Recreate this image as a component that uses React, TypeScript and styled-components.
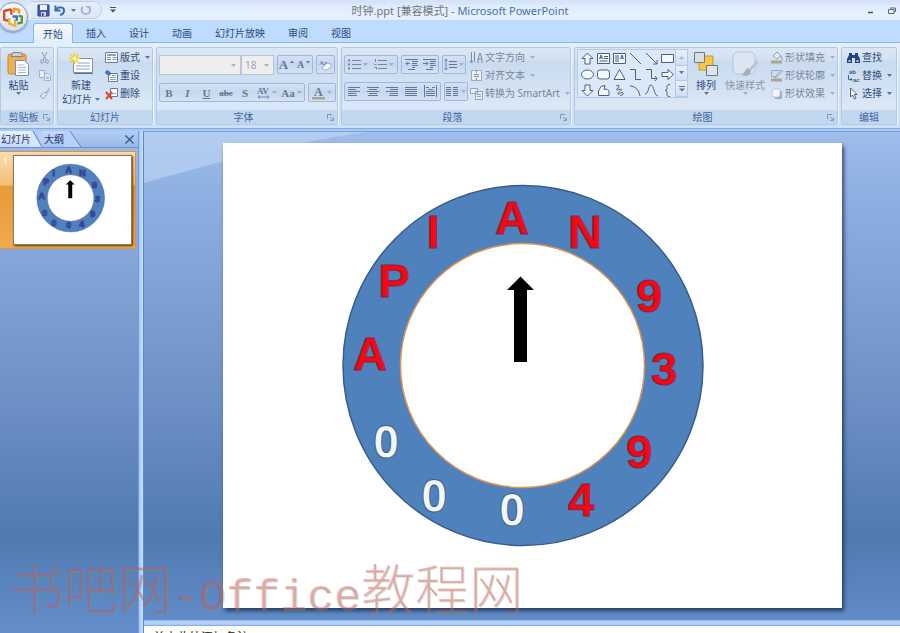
import React from "react";
import styled, { createGlobalStyle, css } from "styled-components";

const uiFont = `"Noto Sans", "Noto Sans CJK SC", sans-serif`;

const GlobalStyle = createGlobalStyle`
  *, *::before, *::after { box-sizing: border-box; }
  body { margin: 0; background: #bfdbff; }
  button, select { font: inherit; color: inherit; margin: 0; padding: 0; border: 0; background: none; }
  svg { display: block; flex: none; }
`;

const Window = styled.div`
  position: relative;
  display: flex;
  flex-direction: column;
  height: 100vh;
  overflow: hidden;
  font: 10px/14px ${uiFont};
  color: #2f4a78;
`;

/* ---------- title bar ---------- */

const TitleBar = styled.header`
  display: grid;
  grid-template-columns: 1fr auto 1fr;
  align-items: center;
  height: 21px;
  padding-left: 20px;
  background: linear-gradient(#d3e2f8 0, #d8e6fa 4px, #e2edfc 6px, #e7f1fe 100%);
  border-bottom: 1px solid #c3d7f0;
`;

const QuickAccess = styled.div`
  display: flex;
  align-items: center;
  gap: 8px;
`;

const QuickPill = styled.div`
  display: flex;
  align-items: center;
  gap: 4px;
  height: 18px;
  margin-left: 11px;
  padding: 0 9px 0 6px;
  border: 1px solid #bccde6;
  border-left: 0;
  border-radius: 0 9px 9px 0;
  background: linear-gradient(#e4eefb, #dbe7f8);
`;

const Title = styled.h1`
  margin: 0;
  font-size: 11px;
  line-height: 14px;
  font-weight: 400;
  color: #71757e;
  white-space: nowrap;
  padding-top: 2px;
`;

const AppName = styled.span`
  color: #4670b4;
`;

const WindowButtons = styled.div`
  display: flex;
  justify-content: flex-end;
  gap: 14px;
  padding: 0 4px 0 0;
`;

const OfficeButton = styled.button`
  position: absolute;
  left: -2px;
  top: 2px;
  display: grid;
  place-items: center;
  width: 30px;
  height: 30px;
  border: 1px solid #8d9ebb;
  border-radius: 50%;
  background: radial-gradient(circle at 50% 30%, #ffffff 0, #eef1f6 45%, #c6cedd 100%);
  box-shadow: 0 1px 2px #7c94bb;
`;

/* ---------- ribbon ---------- */

const TabStrip = styled.nav`
  display: flex;
  align-items: flex-end;
  height: 22px;
  padding-left: 33px;
  background: #bfdbff;
  border-bottom: 1px solid #8fb3e3;
`;

const RibbonTab = styled.button<{ $active?: boolean }>`
  height: 20px;
  padding: 0 9px;
  margin-right: 3px;
  color: #2b4a80;
  border: 1px solid transparent;
  border-bottom: 0;
  border-radius: 3px 3px 0 0;
  ${(p) =>
    p.$active &&
    css`
      margin-bottom: -1px;
      border-color: #8fb3e3;
      background: linear-gradient(#f6faff, #e3edf9);
    `}
`;

const Ribbon = styled.div`
  display: flex;
  gap: 3px;
  height: 86px;
  padding: 4px 3px 3px 0;
  background: linear-gradient(#e6effa, #d3e3f6 30%, #cfe0f5);
  border-bottom: 1px solid #86aada;
`;

const Group = styled.section<{ $w: number; $grow?: boolean }>`
  display: flex;
  flex-direction: column;
  flex: ${(p) => (p.$grow ? "1 0" : "0 0")} ${(p) => p.$w}px;
  border: 1px solid #b0c9e7;
  border-radius: 2px;
  overflow: hidden;
  background: linear-gradient(#dbe7f5 0, #d2e1f2 12px, #c9dbef 14px, #dce9f7 64px);
  box-shadow: 1px 0 0 #f0f6fd;
`;

const GroupBody = styled.div<{ $gap?: number }>`
  flex: 1;
  display: flex;
  gap: ${(p) => p.$gap ?? 3}px;
  padding: 0 2px;
`;

const GroupLabel = styled.footer`
  display: flex;
  align-items: center;
  height: 14px;
  padding: 0 3px;
  background: #c1d8f0;
  color: #44649f;
`;

const LabelText = styled.h2`
  flex: 1;
  margin: 0;
  font-size: 10px;
  line-height: 14px;
  font-weight: 400;
  text-align: center;
`;

const BigButton = styled.button<{ $w: number; $off?: boolean }>`
  display: flex;
  flex-direction: column;
  align-items: center;
  width: ${(p) => p.$w}px;
  padding-top: 2px;
  line-height: 14px;
  white-space: nowrap;
  color: ${(p) => (p.$off ? "#8c95a4" : "#2f4a78")};
`;

const BigPicture = styled.span`
  display: flex;
  align-items: center;
  height: 28px;
`;

const ButtonLine = styled.span`
  display: flex;
  align-items: center;
  gap: 3px;
`;

const Stack = styled.div<{ $inset?: boolean }>`
  display: flex;
  flex-direction: column;
  padding-left: ${(p) => (p.$inset ? 3 : 0)}px;
`;

const SmallButton = styled.button<{ $off?: boolean }>`
  display: flex;
  align-items: center;
  gap: 2px;
  height: 18px;
  white-space: nowrap;
  color: ${(p) => (p.$off ? "#7b8596" : "#2f4a78")};
`;

const Rows = styled.div`
  display: flex;
  flex-direction: column;
  gap: 8px;
  padding-top: 7px;
`;

const Row = styled.div`
  display: flex;
  gap: 3px;
`;

const ComboPair = styled.div`
  display: flex;
`;

const ToolSet = styled.div`
  display: flex;
  height: 19px;
  border: 1px solid #9db8da;
  border-radius: 2px;
  background: linear-gradient(#d3e1f2, #c6d8ee 50%, #d3e2f4);
`;

const Tool = styled.button<{ $w: number }>`
  display: flex;
  align-items: center;
  justify-content: center;
  gap: 2px;
  width: ${(p) => p.$w}px;
  color: #65779a;
`;

const Glyph = styled.span<{ $size?: number; $kind?: "bold" | "italic" | "under" | "strike" }>`
  font-family: "Liberation Serif", serif;
  font-size: ${(p) => p.$size ?? 11}px;
  line-height: 14px;
  font-weight: 700;
  font-style: ${(p) => (p.$kind === "italic" ? "italic" : "normal")};
  text-decoration: ${(p) => (p.$kind === "under" ? "underline" : p.$kind === "strike" ? "line-through" : "none")};
`;

const Combo = styled.div<{ $w: number }>`
  position: relative;
  width: ${(p) => p.$w}px;
  height: 20px;
  border: 1px solid #b4c5dc;
  background: #eeeeee;
`;

const ComboSelect = styled.select`
  appearance: none;
  width: 100%;
  height: 100%;
  padding-left: 3px;
  color: #a0a4aa;
`;

const ComboArrow = styled.span`
  position: absolute;
  right: 4px;
  top: 8px;
  pointer-events: none;
`;

const Gallery = styled.div`
  display: flex;
  height: 49px;
  margin-top: 1px;
  border: 1px solid #b4cae6;
  background: #dae8f8;
`;

const GalleryGrid = styled.div`
  display: grid;
  grid-template-columns: repeat(6, 16px);
  grid-template-rows: repeat(3, 16px);
  padding-left: 1px;
  place-items: center;
`;

const GalleryScroll = styled.div`
  display: grid;
  grid-template-rows: repeat(3, 1fr);
  width: 12px;
  border-left: 1px solid #b4cae6;
`;

const ScrollButton = styled.button`
  display: grid;
  place-items: center;
  border-bottom: 1px solid #b4cae6;
  background: linear-gradient(#e6f0fc, #cfdff3);
`;

/* ---------- work area ---------- */

const Workspace = styled.div`
  flex: 1;
  display: flex;
  min-height: 0;
  padding-top: 2px;
  background: #a9c9f3;
`;

const paneFill = "linear-gradient(#9ebdeb 0, #8fb0e2 60px, #7e9fd2 170px, #6b8ec4 280px, #4f7ab0 405px, #6690cd 510px)";

const SidePane = styled.aside`
  display: flex;
  flex-direction: column;
  width: 139px;
  border-right: 1px solid #6f9ad6;
  background: ${paneFill};
`;

const PaneHeader = styled.div`
  display: flex;
  align-items: center;
  height: 17px;
  background: linear-gradient(#b4cdf3, #98b9ea);
  border-bottom: 1px solid #6c93cf;
`;

const PaneTab = styled.button<{ $active?: boolean }>`
  height: 16px;
  padding: 0 0 0 ${(p) => (p.$active ? 1 : 2)}px;
  color: #1f3566;
  white-space: nowrap;
  background: ${(p) => (p.$active ? "linear-gradient(#eaf2fe, #c3d8f8)" : "linear-gradient(#c6dafa, #a6c3f0)")};
`;

const PaneClose = styled.button`
  margin-left: auto;
  padding: 4px;
`;

const ThumbRow = styled.button`
  display: flex;
  align-items: flex-start;
  width: 136px;
  margin-top: 3px;
  padding: 3px;
  border: solid #d7924c;
  border-width: 1px 1px 1px 0;
  background: linear-gradient(#fbdcae 0, #f5bf77 34%, #e79a38 36%, #f0aa4e 100%);
`;

const ThumbNumber = styled.span`
  width: 10px;
  color: #ffffff;
  text-align: left;
  font-size: 8px;
  line-height: 14px;
`;

const ThumbSheet = styled.span`
  flex: 1;
  background: #ffffff;
  border: 1px solid #8a7a60;
  box-shadow: 1px 1px 2px #5f3a10;
`;

const Splitter = styled.div`
  width: 4px;
  background: linear-gradient(90deg, #a4c8f6, #c6dffd);
`;

const MainColumn = styled.main`
  flex: 1;
  display: flex;
  flex-direction: column;
  min-width: 0;
  border-left: 1px solid #5d8acb;
`;

const Canvas = styled.div`
  position: relative;
  flex: 1;
  min-height: 0;
  padding: 11px 58px 12px 79px;
  background: ${paneFill};
  border-top: 1px solid #7ba2da;
  overflow: hidden;
`;

const Sheen = styled.svg`
  position: absolute;
  left: 0;
  top: 0;
`;

const SlideSheet = styled.article`
  position: relative;
  background: #ffffff;
  box-shadow: 2px 3px 4px rgba(20, 40, 70, 0.75);
`;

const NotesBar = styled.div`
  flex: none;
  height: 6px;
  background: linear-gradient(#8fb4ea 0, #b9d4f8 2px, #a6c6f2 5px, #6f98d2 6px);
`;

const Notes = styled.div`
  flex: none;
  height: 7px;
  padding: 3px 9px 0;
  overflow: hidden;
  background: #ffffff;
  color: #222222;
  font-size: 12px;
  line-height: 18px;
`;

const Watermark = styled.div`
  position: absolute;
  left: 10px;
  bottom: 0;
  font-family: "Noto Sans CJK SC", sans-serif;
  font-weight: 300;
  font-size: 54px;
  line-height: 68px;
  white-space: nowrap;
  color: rgba(236, 60, 80, 0.38);
  text-shadow: 1px 1px 0 rgba(70, 190, 110, 0.25);
  pointer-events: none;
`;

const WatermarkLatin = styled.span`
  font-family: "Liberation Mono", monospace;
  font-weight: 400;
  font-size: 45px;
`;

/* ---------- drawings ---------- */

const Arrow = ({ c = "#5f7295" }: { c?: string }) => (
  <svg width="5" height="3" viewBox="0 0 5 3"><path d="M0 0h5L2.500 3z" fill={c} /></svg>
);

const Launcher = () => (
  <svg width="7" height="7" viewBox="0 0 7 7" fill="none" stroke="#7d97bd">
    <path d="M.5 5V.5H5M3 3l3 3M6.500 3.500v3h-3" />
  </svg>
);

const icons: Record<string, React.ReactNode> = {
  cut: <g fill="none" stroke="#8c9bb3"><path d="M4 1l4 8M9 1L5 9" /><circle cx="4" cy="10.500" r="1.600" /><circle cx="9" cy="10.500" r="1.600" /></g>,
  copy: <g fill="#e4ecf6" stroke="#9eafc8"><path d="M1.500 1.500h5v7h-5zM6.500 4.500h4l2 2v5h-6z" /><path d="M8 8h3M8 9.500h3" /></g>,
  brush: <g><path d="M11 1L7 6l2 1 3-5z" fill="#a9b5c7" /><path d="M7 5L2 9l3 3 4-5z" fill="#dfe6ef" stroke="#9aa9c0" /></g>,
  layout: <g><path d="M.5 1.500h12v10H.5z" fill="#fff" stroke="#5f7ea9" /><path d="M2 3h9v2H2z" fill="#86a0c4" /><path d="M2 6.500h4M2 8.500h4M7.500 6.500h4M7.500 8.500h4" stroke="#7e98bd" /></g>,
  reset: <g><path d="M3.500 4.500h9v8h-9z" fill="#fff" stroke="#5f7ea9" /><path d="M5 10.500h6M5 8.500h6M7 6.500h4" stroke="#8aa2c5" /><path d="M5 6.500C6 2.500 4 2 2.500 2.500V1L0 3.500 2.500 6V4.500" fill="#4876b8" stroke="#3a65a5" strokeWidth=".7" /></g>,
  remove: <g><path d="M5.500 1.500h7v8h-7z" fill="#fff" stroke="#5f7ea9" /><path d="M7 6.500h4" stroke="#7e98bd" /><path d="M1 5l6 7M7 5l-6 7" stroke="#e0452b" strokeWidth="2" /></g>,
  textDir: <g fill="none" stroke="#7d8ca3"><path d="M1.500 1v10M4.500 1v10M8 12V8l2-6 2 6v4M8 8h4" /><path d="M0 10l1.500 2L3 10" /></g>,
  alignText: <g><path d="M1.500 1.500h10v10h-10z" fill="#eef3f9" stroke="#98a9c2" /><path d="M4 5.500h5M4 7.500h5M6.500 2v2M6.500 9v2" stroke="#7d8ca3" /></g>,
  smartArt: <g fill="#e6edf6" stroke="#93a4bd"><path d="M.5 1.500h7v5h-7zM5.500 4.500h7v8h-7z" /><path d="M7 7.500h4M7 9.500h4" /></g>,
  fill: <g><path d="M3 5l4-4 4 4-4 3z" fill="#e6ebf1" stroke="#949fae" /><path d="M11 5c1 1 1.500 3 1 4" stroke="#949fae" fill="none" /><path d="M1 9.500h11v3H1z" fill="#aaa593" /></g>,
  outline: <g><path d="M1.500 1.500h8M1.500 1.500v6h5" stroke="#98a9c2" fill="none" /><path d="M11.500 1L6 7l-1 2 2-1 5.500-6z" fill="#dfe5ee" stroke="#8594ac" strokeWidth=".8" /><path d="M1 9.500h11v3H1z" fill="#aaa593" /></g>,
  effect: <g><path d="M4 4h8v7a2 2 0 01-2 1H5z" fill="#9fabbc" /><rect x="2" y="2" width="8" height="8" rx="2" fill="#f2f5f9" stroke="#bcc7d6" /></g>,
  find: <g fill="#23457f"><path d="M2 2h3v2h3V2h3v2l2 4v4H8V7H5v5H0V8l2-4z" /><path d="M1.500 9h2v2h-2zM9.500 9h2v2h-2z" fill="#b9cdea" /></g>,
  replace: <g fontFamily="Liberation Sans" fontWeight="700" fontSize="6"><text x="2" y="5" fill="#44546e">ab</text><text x="6" y="13" fill="#2e7a42">ac</text><path d="M1.500 6v4.500H5M3.500 9L5 10.500 3.500 12" fill="none" stroke="#3566b0" /></g>,
  pointer: <path d="M3.500 1v9l2-2 2 4 1.500-1-1.800-3.500H10z" fill="#fff" stroke="#44546e" strokeWidth=".9" />,
  eraser: <g><text x="0" y="7" fontSize="7" fontFamily="Liberation Serif" fontWeight="700" fill="#70819d">Aa</text><path d="M3 10l5-5 4 1v3l-4 3H5z" fill="#f1f4f8" stroke="#97a5bb" strokeWidth=".8" /></g>,
  bullets: <g stroke="#7486a4"><path d="M0 2.500h2M0 6.500h2M0 10.500h2" strokeWidth="2" /><path d="M4 2.500h9M4 6.500h9M4 10.500h9" /></g>,
  numbers: <g stroke="#7486a4"><path d="M1.500 1v3M.5 6.500h2M.5 9.500h2v2" fill="none" /><path d="M4 2.500h9M4 6.500h9M4 10.500h9" /></g>,
  outdent: <g stroke="#62779b"><path d="M0 1.500h13M7 3.500h6M7 5.500h5M7 7.500h6M7 9.500h3M3 11.500h7" /><path d="M5 5.500H1M3 3.500l-2 2 2 2" fill="none" /></g>,
  indent: <g stroke="#62779b"><path d="M0 1.500h13M7 3.500h6M7 5.500h5M7 7.500h6M7 9.500h3M3 11.500h7" /><path d="M0 5.500h5M3 3.500l2 2-2 2" fill="none" /></g>,
  spacing: <g stroke="#62779b"><path d="M5 3.500h8M5 6.500h8M5 9.500h8" /><path d="M2 1v11M.5 3L2 1l1.500 2M.5 10L2 12l1.500-2" fill="none" strokeWidth=".8" /></g>,
  left: <path d="M0 2.500h12M0 4.500h8M0 6.500h12M0 8.500h8M0 10.500h9" stroke="#62779b" />,
  center: <path d="M0 2.500h12M2 4.500h8M0 6.500h12M2 8.500h8M1 10.500h10" stroke="#62779b" />,
  right: <path d="M0 2.500h12M4 4.500h8M0 6.500h12M4 8.500h8M3 10.500h9" stroke="#62779b" />,
  justify: <path d="M0 2.500h12M0 4.500h12M0 6.500h12M0 8.500h12M0 10.500h12" stroke="#62779b" />,
  spread: <g stroke="#62779b"><path d="M.5 0v12M12.500 0v12M2 2.500h3M8 2.500h3M2 6.500h9M2 8.500h9M2 10.500h9M4 4.500h5" /></g>,
  columns: <path d="M0 2.500h5M0 4.500h5M0 6.500h5M0 8.500h5M0 10.500h5M7 2.500h5M7 4.500h5M7 6.500h5M7 8.500h5M7 10.500h5" stroke="#62779b" />,
  spacingAV: <g><text x="0" y="8" fontSize="9" fontFamily="Liberation Serif" fontWeight="700" fill="#65779a">AV</text><path d="M1 11h10M3 9.500L1 11l2 1.500M10 9.500l2 1.500-2 1.500" fill="none" stroke="#65779a" strokeWidth=".8" /></g>,
};

const Icon = ({ name, size = 13 }: { name: string; size?: number }) => (
  <svg width={size} height={size} viewBox="0 0 13 13" aria-hidden="true">{icons[name]}</svg>
);

const shapes: [string, React.ReactNode][] = [
  ["上箭头", <path d="M6.500 1L12 6.500H9V12H4V6.500H1z" />],
  ["文本框", <g><path d="M.5 1.500h12v10H.5z" /><path d="M2.500 7L4 3l1.500 4M3 6h2M7 4.500h4M7 6.500h4M2.500 9h8" /></g>],
  ["竖排文本框", <g><path d="M.5 1.500h12v10H.5z" /><path d="M7.500 7L9 3l1.500 4M8 6h2M3 3v7M5 3v7" /></g>],
  ["直线", <path d="M1 1l11 11" />],
  ["箭头", <path d="M1 1l11 11M12 8v4H8" />],
  ["矩形", <path d="M.5 2.500h12v8H.5z" />],
  ["椭圆", <ellipse cx="6.500" cy="6.500" rx="6" ry="4.500" />],
  ["圆角矩形", <rect x=".5" y="2" width="12" height="9" rx="2.500" />],
  ["三角形", <path d="M6.500 1.500L12 11.500H1z" />],
  ["肘形线", <path d="M1 1.500h5.500v10H12" fill="none" />],
  ["肘形箭头", <path d="M1 1.500h5.500v9H12M10 8l2 2.500L10 13" fill="none" />],
  ["右箭头", <path d="M1 4.500h6V1.500l5.500 5-5.500 5v-3H1z" />],
  ["下箭头", <path d="M6.500 12L12 6.500H9V1H4v5.500H1z" />],
  ["任意多边形", <path d="M1.500 11.500V7L4 2.500l4-1-1 4c2-1 5 0 5 2.500v3.500z" />],
  ["自由曲线", <path d="M3 2c4-2 4 1 1 3-2 2 3 0 4 0 2 1-4 4-3 5s4-3 5-1-2 2-3 3" fill="none" />],
  ["弧形", <path d="M1 2c5 0 9 4 10 10" fill="none" />],
  ["曲线", <path d="M0 10C4 10 3 1 6 1S9 12 13 12" fill="none" />],
  ["左大括号", <path d="M9 .5c-3 0-3 1-3 3s0 3-2 3c2 0 2 1 2 3s0 3 3 3" fill="none" />],
];

const OfficeLogo = () => (
  <svg width="22" height="22" viewBox="0 0 20 20" fill="none" strokeWidth="2.200" strokeLinejoin="round">
    <path d="M8.500 3L2 4.500v8l4 1M8.500 3v5" stroke="#d5502c" />
    <path d="M11 6V2.500l4.500 1V7" stroke="#ef9a2a" />
    <path d="M15 9l3 .5v5.500l-4 1" stroke="#5b9a3c" />
    <path d="M6.500 11v5l5.500 2v-6" stroke="#e9b82f" />
    <path d="M9.500 9.500h4v4" stroke="#3d74c4" />
  </svg>
);

const PasteArt = () => (
  <svg width="24" height="26" viewBox="0 0 24 26">
    <rect x="1" y="3" width="18" height="20" rx="2" fill="#edb04f" stroke="#c5862d" />
    <path d="M6 1.500h8l2 4H4z" fill="#c9ced6" stroke="#7f8793" />
    <path d="M8.500 9.500h9l4 4v11h-13z" fill="#fdfeff" stroke="#7a91b5" />
    <path d="M11 14h6M11 16.500h8M11 19h8M11 21.500h8" stroke="#a5b6cf" />
  </svg>
);

const NewSlideArt = () => (
  <svg width="26" height="24" viewBox="0 0 26 24">
    <path d="M5.500 6.500h19v14h-19z" fill="#fff" stroke="#7d92b2" />
    <path d="M6 21.500h19" stroke="#5d7294" />
    <path d="M10 11h12M8 14h14M8 17h14" stroke="#b3c1d7" strokeWidth="1.500" />
    <path d="M6.500 1v11M1 6.500h11M2.500 2.500l8 8M10.500 2.500l-8 8" stroke="#f6cf27" strokeWidth="1.700" />
    <circle cx="6.500" cy="6.500" r="2" fill="#fff6b0" />
  </svg>
);

const ArrangeArt = () => (
  <svg width="26" height="26" viewBox="0 0 26 26">
    <path d="M6 5h14v14H6z" fill="#f5c842" stroke="#c99a1f" />
    <path d="M1.500 1.500h10v10h-10z" fill="#d9dee6" stroke="#69788f" />
    <path d="M13.500 14.500h11v10h-11z" fill="#dfe3ea" stroke="#69788f" />
  </svg>
);

const StyleArt = () => (
  <svg width="28" height="27" viewBox="0 0 28 27">
    <rect x="2" y="1" width="22" height="22" rx="5" fill="#dde5f0" stroke="#b8c5d7" />
    <path d="M26 9l-8 9 2 2 7-9z" fill="#b9c1cd" />
    <path d="M17 17c-3 1-3 5-7 7 5 2 10 0 10-4z" fill="#a3adbb" />
  </svg>
);

type Mark = { t: string; x: number; y: number; white?: boolean };
const marks: Mark[] = [
  { t: "A", x: 289, y: 91 },
  { t: "N", x: 362, y: 105 },
  { t: "9", x: 426, y: 169 },
  { t: "3", x: 441, y: 242 },
  { t: "9", x: 416, y: 325 },
  { t: "4", x: 358, y: 373 },
  { t: "0", x: 289, y: 383, white: true },
  { t: "0", x: 211, y: 369, white: true },
  { t: "0", x: 163, y: 315, white: true },
  { t: "A", x: 147, y: 227 },
  { t: "P", x: 171, y: 154 },
  { t: "I", x: 210, y: 105 },
];

const Clock = ({ small }: { small?: boolean }) => (
  <svg width="100%" viewBox="0 0 619 465" role="img" aria-label="时钟">
    <circle cx="300" cy="222.500" r="180" fill="#4f81bd" stroke="#385d8a" strokeWidth="1.500" />
    <circle cx="299.500" cy="222.500" r="122" fill="#fff" stroke="#e0954f" strokeWidth="1.500" />
    <path d="M297.500 133.500l13.500 13.500h-7v72h-13v-72h-7z" fill="#000" stroke={small ? "#000" : "none"} strokeWidth="8" />
    {marks.map((m, i) => (
      <text
        key={i}
        x={m.x}
        y={m.y}
        textAnchor="middle"
        fontFamily={m.white ? "Open Sans, sans-serif" : "Liberation Sans, sans-serif"}
        fontWeight="700"
        fontSize={m.white ? 45 : 47}
        fill={small ? (m.white ? "#4f81bd" : "#6a3a92") : m.white ? "#f1f6f6" : "#fb0510"}
        stroke={small ? "#35469c" : m.white ? "#3d5f80" : "#7a2748"}
        strokeWidth={small ? 5 : 1}
      >
        {m.t}
      </text>
    ))}
  </svg>
);

/* ---------- ribbon parts ---------- */

const RibbonGroup = ({ w, label, launcher, grow, gap, children }: {
  w: number; label: string; launcher?: boolean; grow?: boolean; gap?: number; children: React.ReactNode;
}) => (
  <Group $w={w} $grow={grow}>
    <GroupBody $gap={gap}>{children}</GroupBody>
    <GroupLabel>
      <LabelText>{label}</LabelText>
      {launcher && <button aria-label={label + "选项"}><Launcher /></button>}
    </GroupLabel>
  </Group>
);

const Command = ({ icon, text, off, arrow }: { icon: string; text?: string; off?: boolean; arrow?: boolean }) => (
  <SmallButton $off={off} aria-label={text ?? icon}>
    <Icon name={icon} />
    {text}
    {arrow && <>&nbsp;<Arrow c={off ? "#a3aebf" : undefined} /></>}
  </SmallButton>
);

const IconTool = ({ name, w = 19, arrow }: { name: string; w?: number; arrow?: boolean }) => (
  <Tool $w={w} aria-label={name}>
    <Icon name={name} />
    {arrow && <Arrow c="#9fb0c9" />}
  </Tool>
);

export default function App() {
  return (
    <>
      <GlobalStyle />
      <Window>
        <TitleBar>
          <QuickAccess>
            <QuickPill>
              <button aria-label="保存">
                <svg width="13" height="13" viewBox="0 0 13 13"><path d="M1 1h11v11H1z" fill="#4659b5" stroke="#2d3d8c" /><path d="M3 1h7v5H3z" fill="#eef2fb" /><path d="M4 8h5v4H4z" fill="#cdd5ea" /><path d="M5 9h1.500v3H5z" fill="#2d3d8c" /></svg>
              </button>
              <button aria-label="撤消">
                <svg width="13" height="13" viewBox="0 0 13 13" fill="none" stroke="#3a68b8" strokeWidth="2"><path d="M2 5.500C5 2 10 3 10 6.500 10 9 8 10.500 6 11" /><path d="M1.500 1.500v5h5" /></svg>
              </button>
              <Arrow />
              <button aria-label="重复">
                <svg width="12" height="12" viewBox="0 0 13 13" fill="none" stroke="#a3b1c9" strokeWidth="2"><path d="M3 3C0 7 3 11 6.500 11S13 7 9.500 3" /><path d="M6.500 3h4V7" strokeWidth="1.500" /></svg>
              </button>
            </QuickPill>
            <button aria-label="自定义快速访问工具栏">
              <svg width="6" height="6" viewBox="0 0 6 6"><path d="M0 .5h6" stroke="#3f5377" /><path d="M0 2.500h6L3 5.500z" fill="#3f5377" /></svg>
            </button>
          </QuickAccess>
          <Title>时钟.ppt [兼容模式] - <AppName>Microsoft PowerPoint</AppName></Title>
          <WindowButtons>
            <button aria-label="最小化"><svg width="7" height="7" viewBox="0 0 7 7"><path d="M1 5.500h5" stroke="#44546e" strokeWidth="1.500" /></svg></button>
            <button aria-label="还原"><svg width="8" height="7" viewBox="0 0 8 7" fill="none" stroke="#5a6b87"><path d="M2 1h5.500v3.500H6" /><path d="M.5 2.500H6v4H.5z" fill="#e7f1fe" /></svg></button>
          </WindowButtons>
        </TitleBar>

        <TabStrip>
          <RibbonTab $active>开始</RibbonTab>
          {["插入", "设计", "动画", "幻灯片放映", "审阅", "视图"].map((t) => (
            <RibbonTab key={t}>{t}</RibbonTab>
          ))}
        </TabStrip>
        <OfficeButton aria-label="Office 按钮"><OfficeLogo /></OfficeButton>

        <Ribbon>
          <RibbonGroup w={54} label="剪贴板" launcher gap={4}>
            <BigButton $w={31}>
              <BigPicture><PasteArt /></BigPicture>
              粘贴
              <Arrow />
            </BigButton>
            <Stack>
              <Command icon="cut" off />
              <Command icon="copy" off />
              <Command icon="brush" off />
            </Stack>
          </RibbonGroup>

          <RibbonGroup w={96} label="幻灯片">
            <BigButton $w={42}>
              <BigPicture><NewSlideArt /></BigPicture>
              <span>新建</span>
              <ButtonLine>幻灯片<Arrow /></ButtonLine>
            </BigButton>
            <Stack>
              <Command icon="layout" text="版式" arrow />
              <Command icon="reset" text="重设" />
              <Command icon="remove" text="删除" />
            </Stack>
          </RibbonGroup>

          <RibbonGroup w={182} label="字体" launcher>
            <Rows>
              <Row>
                <ComboPair>
                  <Combo $w={82}><ComboSelect aria-label="字体" /><ComboArrow><Arrow c="#a9b3c2" /></ComboArrow></Combo>
                  <Combo $w={33}><ComboSelect aria-label="字号"><option>18</option></ComboSelect><ComboArrow><Arrow c="#a9b3c2" /></ComboArrow></Combo>
                </ComboPair>
                <ToolSet>
                  <Tool $w={17}><Glyph $size={13}>A</Glyph><svg width="4" height="10" viewBox="0 0 4 10"><path d="M0 3l2-2.500L4 3z" fill="#65779a" /></svg></Tool>
                  <Tool $w={17}><Glyph $size={10}>A</Glyph><svg width="4" height="10" viewBox="0 0 4 10"><path d="M0 1l2 2.500L4 1z" fill="#65779a" /></svg></Tool>
                </ToolSet>
                <ToolSet><IconTool name="eraser" w={17} /></ToolSet>
              </Row>
              <Row>
                <ToolSet>
                  <Tool $w={18}><Glyph $kind="bold">B</Glyph></Tool>
                  <Tool $w={19}><Glyph $kind="italic">I</Glyph></Tool>
                  <Tool $w={19}><Glyph $kind="under">U</Glyph></Tool>
                  <Tool $w={20}><Glyph $size={9} $kind="strike">abc</Glyph></Tool>
                  <Tool $w={18}><Glyph $kind="bold">S</Glyph></Tool>
                  <IconTool name="spacingAV" w={25} arrow />
                  <Tool $w={25}><Glyph>Aa</Glyph><Arrow c="#9fb0c9" /></Tool>
                </ToolSet>
                <ToolSet>
                  <Tool $w={26} aria-label="字体颜色">
                    <svg width="13" height="14" viewBox="0 0 13 14"><text x="2" y="10" fontFamily="Liberation Serif" fontWeight="700" fontSize="12" fill="#65779a">A</text><path d="M0 11h13v2.500H0z" fill="#aaa593" /></svg>
                    <Arrow c="#9fb0c9" />
                  </Tool>
                </ToolSet>
              </Row>
            </Rows>
          </RibbonGroup>

          <RibbonGroup w={230} label="段落" launcher gap={2}>
            <Rows>
              <Row>
                <ToolSet><IconTool name="bullets" w={26} arrow /><IconTool name="numbers" w={26} arrow /></ToolSet>
                <ToolSet><IconTool name="outdent" w={18} /><IconTool name="indent" w={18} /></ToolSet>
                <ToolSet><IconTool name="spacing" w={22} arrow /></ToolSet>
              </Row>
              <Row>
                <ToolSet>
                  {["left", "center", "right", "justify", "spread"].map((n) => <IconTool key={n} name={n} />)}
                </ToolSet>
                <ToolSet><IconTool name="columns" w={22} arrow /></ToolSet>
              </Row>
            </Rows>
            <Stack>
              <Command icon="textDir" text="文字方向" off arrow />
              <Command icon="alignText" text="对齐文本" off arrow />
              <Command icon="smartArt" text="转换为 SmartArt" off arrow />
            </Stack>
          </RibbonGroup>

          <RibbonGroup w={264} label="绘图" launcher gap={4}>
            <Gallery>
              <GalleryGrid>
                {shapes.map(([name, art]) => (
                  <button key={name} aria-label={name}>
                    <svg width="13" height="13" viewBox="0 0 13 13" fill="#f4f8fd" stroke="#4a5f80">{art}</svg>
                  </button>
                ))}
              </GalleryGrid>
              <GalleryScroll>
                <ScrollButton aria-label="上一行"><svg width="5" height="3"><path d="M0 3h5L2.500 0z" fill="#a9b6c9" /></svg></ScrollButton>
                <ScrollButton aria-label="下一行"><Arrow /></ScrollButton>
                <ScrollButton aria-label="其他形状"><svg width="6" height="6" viewBox="0 0 6 6"><path d="M0 .5h6" stroke="#5f7295" /><path d="M0 2.500h6L3 5.500z" fill="#5f7295" /></svg></ScrollButton>
              </GalleryScroll>
            </Gallery>
            <BigButton $w={28}>
              <BigPicture><ArrangeArt /></BigPicture>
              排列
              <Arrow />
            </BigButton>
            <BigButton $w={42} $off>
              <BigPicture><StyleArt /></BigPicture>
              快速样式
              <Arrow c="#a3aebf" />
            </BigButton>
            <Stack>
              <Command icon="fill" text="形状填充" off arrow />
              <Command icon="outline" text="形状轮廓" off arrow />
              <Command icon="effect" text="形状效果" off arrow />
            </Stack>
          </RibbonGroup>

          <RibbonGroup w={55} label="编辑" grow>
            <Stack $inset>
              <Command icon="find" text="查找" />
              <Command icon="replace" text="替换" arrow />
              <Command icon="pointer" text="选择" arrow />
            </Stack>
          </RibbonGroup>
        </Ribbon>

        <Workspace>
          <SidePane>
            <PaneHeader>
              <PaneTab $active>幻灯片</PaneTab>
              <svg width="11" height="16" viewBox="0 0 11 16"><path d="M0 0h2l9 16H0z" fill="#d6e5fc" /><path d="M6 0h5v16z" fill="#b8d0f5" /><path d="M2 0l9 16" stroke="#5d83bf" fill="none" /></svg>
              <PaneTab>大纲</PaneTab>
              <svg width="18" height="16" viewBox="0 0 18 16"><path d="M0 0h6l11 16H0z" fill="#b8d0f5" /><path d="M6 0l11 16" stroke="#5d83bf" fill="none" /></svg>
              <PaneClose aria-label="关闭">
                <svg width="9" height="9" viewBox="0 0 9 9"><path d="M.5.5l8 8M8.500.5l-8 8" stroke="#34598f" strokeWidth="1.400" /></svg>
              </PaneClose>
            </PaneHeader>
            <ThumbRow aria-label="幻灯片 1">
              <ThumbNumber>1</ThumbNumber>
              <ThumbSheet><Clock small /></ThumbSheet>
            </ThumbRow>
          </SidePane>
          <Splitter />
          <MainColumn>
            <Canvas>
              <Sheen width="260" height="54" viewBox="0 0 260 54" aria-hidden="true">
                <path d="M0 0h225C160 8 80 28 0 51z" fill="#c2d7f5" opacity=".6" />
              </Sheen>
              <SlideSheet><Clock /></SlideSheet>
            </Canvas>
            <NotesBar />
            <Notes>单击此处添加备注</Notes>
          </MainColumn>
        </Workspace>

        <Watermark>
          书吧网<WatermarkLatin>-Office</WatermarkLatin>教程网
        </Watermark>
      </Window>
    </>
  );
}
